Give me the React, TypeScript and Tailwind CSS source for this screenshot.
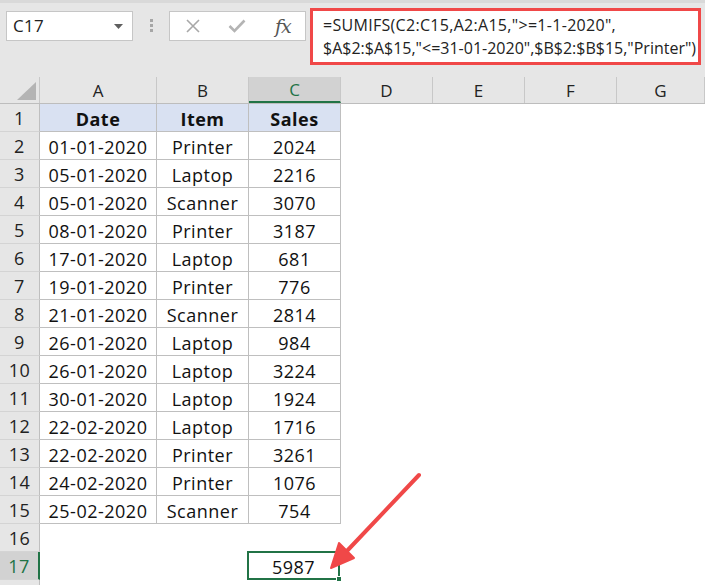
import React from "react";

const rows: [string, string, string][] = [
  ["01-01-2020", "Printer", "2024"],
  ["05-01-2020", "Laptop", "2216"],
  ["05-01-2020", "Scanner", "3070"],
  ["08-01-2020", "Printer", "3187"],
  ["17-01-2020", "Laptop", "681"],
  ["19-01-2020", "Printer", "776"],
  ["21-01-2020", "Scanner", "2814"],
  ["26-01-2020", "Laptop", "984"],
  ["26-01-2020", "Laptop", "3224"],
  ["30-01-2020", "Laptop", "1924"],
  ["22-02-2020", "Laptop", "1716"],
  ["22-02-2020", "Printer", "3261"],
  ["24-02-2020", "Printer", "1076"],
  ["25-02-2020", "Scanner", "754"],
];

const cols = ["A", "B", "C", "D", "E", "F", "G"];
const colW = ["w-[117px]", "w-[92px]", "w-[92px]", "w-[92px]", "w-[92px]", "w-[92px]", "flex-1"];

function RowHeader({ n, selected }: { n?: number; selected?: boolean }) {
  return selected ? (
    <div className="w-[40px] shrink-0 h-full flex items-center justify-center pt-[2px] bg-[#d2d2d2] text-[#217346] border-r-2 border-r-[#217346] border-b border-b-[#d4d4d4]">
      {n}
    </div>
  ) : (
    <div className="w-[40px] shrink-0 h-full flex items-center justify-center pt-[2px] bg-[#e6e6e6] text-[#222] border-r border-r-[#bfbfbf] border-b border-b-[#d4d4d4]">
      {n}
    </div>
  );
}

const cell = "shrink-0 flex items-center justify-center pt-[3px] border-r border-b border-[#bfbfbf]";

export default function App() {
  return (
    <div
      className="relative w-[705px] h-[585px] overflow-hidden bg-white text-[18px] text-[#111]"
      style={{ fontFamily: '"Open Sans", "Noto Sans", sans-serif' }}
    >
      {/* Formula bar area */}
      <div className="h-[77px] bg-[#e6e6e6] border-t-[3px] border-t-[#d9d9d9] flex items-start text-[17px]">
        <div className="ml-[6px] mt-[8px] w-[127px] h-[30px] bg-white border border-[#c6c6c6] flex items-center justify-between pl-[6px] pr-[9px] text-[#222] tracking-[0.3px]">
          <span>C17</span>
          <svg width="9" height="5" viewBox="0 0 9 5">
            <polygon points="0,0 9,0 4.5,5" fill="#5f5f5f" />
          </svg>
        </div>
        <div className="ml-[17px] mt-[16px] flex flex-col gap-[2px]">
          <div className="w-[3px] h-[3px] bg-[#a6a6a6]" />
          <div className="w-[3px] h-[3px] bg-[#a6a6a6]" />
          <div className="w-[3px] h-[3px] bg-[#a6a6a6]" />
        </div>
        <div className="ml-[16px] mt-[8px] w-[137px] h-[30px] bg-white border border-[#c6c6c6] flex items-center">
          <svg className="ml-[16px]" width="14" height="14" viewBox="0 0 14 14">
            <path d="M1 1 L13 13 M13 1 L1 13" stroke="#a8a8a8" strokeWidth="1.6" fill="none" />
          </svg>
          <svg className="ml-[28px]" width="18" height="14" viewBox="0 0 18 14">
            <path d="M1.5 7 L6.5 12 L16.5 1.5" stroke="#b4b4b4" strokeWidth="2.6" fill="none" />
          </svg>
          <span
            className="ml-[29px] italic text-[19px] leading-none text-[#555] tracking-[-1px]"
            style={{ fontFamily: '"DejaVu Serif", "Liberation Serif", serif' }}
          >
            fx
          </span>
        </div>
        <div className="ml-[4px] mt-[5px] w-[391px] h-[57px] bg-white border-[3px] border-[#f04848] pl-[10px] pt-[3px] text-[16px] leading-[23px] text-[#222] whitespace-nowrap">
          <div className="tracking-[0.3px]">=SUMIFS(C2:C15,A2:A15,"&gt;=1-1-2020",</div>
          <div>$A$2:$A$15,"&lt;=31-01-2020",$B$2:$B$15,"Printer")</div>
        </div>
      </div>

      {/* Column headers */}
      <div className="flex h-[27px] border-b border-b-[#bdbdbd] bg-[#e6e6e6] text-[17px]">
        <div className="w-[40px] shrink-0 h-full border-r border-r-[#c8c8c8] flex items-end justify-end pr-[3px] pb-[3px]">
          <svg width="19" height="18" viewBox="0 0 19 18">
            <polygon points="19,0 19,18 0,18" fill="#b4b4b4" />
          </svg>
        </div>
        {cols.map((c, i) =>
          c === "C" ? (
            <div
              key={c}
              className={`${colW[i]} shrink-0 h-full flex items-center justify-center pt-[2px] bg-[#d2d2d2] text-[#217346] border-r border-r-[#c8c8c8] border-b-2 border-b-[#217346]`}
            >
              {c}
            </div>
          ) : (
            <div
              key={c}
              className={`${colW[i]} shrink-0 h-full flex items-center justify-center pt-[1px] text-[#222] border-r border-r-[#c8c8c8]`}
            >
              {c}
            </div>
          )
        )}
      </div>

      <div className="tracking-[0.5px]">
        {/* Row 1 headers */}
        <div className="flex h-[28px]">
          <RowHeader n={1} />
          <div className={`w-[117px] bg-[#d9e1f2] font-bold ${cell}`}>Date</div>
          <div className={`w-[92px] bg-[#d9e1f2] font-bold ${cell}`}>Item</div>
          <div className={`w-[92px] bg-[#d9e1f2] font-bold ${cell}`}>Sales</div>
          <div className="flex-1" />
        </div>

        {rows.map((r, i) => (
          <div key={i} className="flex h-[28px]">
            <RowHeader n={i + 2} />
            <div className={`w-[117px] ${cell}`}>{r[0]}</div>
            <div className={`w-[92px] ${cell}`}>{r[1]}</div>
            <div className={`w-[92px] ${cell}`}>{r[2]}</div>
            <div className="flex-1" />
          </div>
        ))}

        <div className="flex h-[28px]">
          <RowHeader n={16} />
          <div className="flex-1" />
        </div>

        <div className="flex h-[28px]">
          <RowHeader n={17} selected />
          <div className="w-[208px] shrink-0" />
          <div className="relative w-[93px] shrink-0 -ml-[1px] -mt-[1px] h-[29px] pt-[3px] border-2 border-[#217346] flex items-center justify-center">
            5987
            <div className="absolute -right-[4px] -bottom-[4px] w-[6px] h-[6px] bg-[#217346] border border-white" />
          </div>
          <div className="flex-1" />
        </div>

        <div className="flex h-[28px]">
          <RowHeader />
          <div className="flex-1" />
        </div>
      </div>

      {/* Red arrow annotation */}
      <svg className="absolute inset-0 pointer-events-none" width="705" height="585" viewBox="0 0 705 585">
        <line x1="419" y1="475" x2="346" y2="552" stroke="#f04848" strokeWidth="4" strokeLinecap="round" />
        <polygon points="331,568 354,558 339,543" fill="#f04848" stroke="#f04848" strokeWidth="2" strokeLinejoin="round" />
      </svg>
    </div>
  );
}
